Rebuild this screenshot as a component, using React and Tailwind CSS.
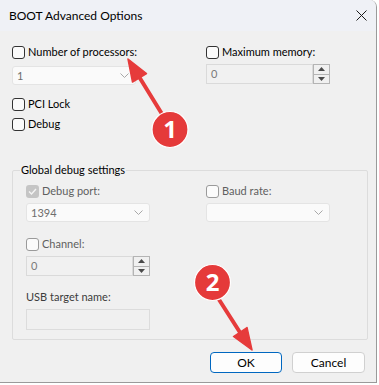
import React from 'react';

const font = { fontFamily: 'Lato, "Noto Sans", sans-serif' };

const Check = ({ checked = false, muted = false }) => {
  if (checked) {
    return (
      <span className="w-[13px] h-[13px] shrink-0 rounded-[3px] bg-[#c5c5c5] flex items-center justify-center">
        <svg width="9" height="7" viewBox="0 0 9 7">
          <polyline points="1,3.5 3.5,6 8,1" fill="none" stroke="#f4f4f4" strokeWidth="1.4" />
        </svg>
      </span>
    );
  }
  return (
    <span
      className={
        muted
          ? 'w-[13px] h-[13px] shrink-0 rounded-[3px] border border-[#9a9a9a] bg-[#fbfbfb]'
          : 'w-[13px] h-[13px] shrink-0 rounded-[3px] border border-[#333333] bg-[#fbfbfb]'
      }
    />
  );
};

const CheckRow = ({ label, checked, muted, className = '' }) => (
  <div className={`h-[14px] flex items-center gap-[3px] ${className}`}>
    <Check checked={checked} muted={muted} />
    <span className={muted ? 'text-[#5f5f5f]' : 'text-black'}>{label}</span>
  </div>
);

const Chevron = () => (
  <svg width="9" height="5" viewBox="0 0 9 5" className="shrink-0">
    <polyline points="0.5,0.5 4.5,4.5 8.5,0.5" fill="none" stroke="#a8a8a8" strokeWidth="1" />
  </svg>
);

const Combo = ({ value, className = '' }) => (
  <div className={`w-[124px] h-[19px] bg-[#fafafa] border border-[#e4e4e4] rounded-[3px] flex items-center justify-between pl-[4px] pr-[6px] text-[#6d6d6d] ${className}`}>
    <span>{value}</span>
    <Chevron />
  </div>
);

const Spin = ({ value, className = '' }) => (
  <div className={`w-[124px] h-[20px] flex ${className}`}>
    <div className="flex-1 border border-[#dadada] bg-[#f1f1f1] flex items-center pl-[4px] text-[#7a7a7a]">{value}</div>
    <div className="w-[17px] flex flex-col border border-[#b4b4b4] bg-[#f0f0f0]">
      <div className="flex-1 flex items-center justify-center border-b border-[#b4b4b4]">
        <svg width="7" height="4" viewBox="0 0 7 4"><polygon points="0,4 3.5,0 7,4" fill="#4a4a4a" /></svg>
      </div>
      <div className="flex-1 flex items-center justify-center">
        <svg width="7" height="4" viewBox="0 0 7 4"><polygon points="0,0 3.5,4 7,0" fill="#4a4a4a" /></svg>
      </div>
    </div>
  </div>
);

const Overlay = () => (
  <svg className="absolute inset-0 pointer-events-none" width="379" height="385" viewBox="0 0 379 385">
    <line x1="162" y1="114" x2="138" y2="75" stroke="#e63b3b" strokeWidth="4" strokeLinecap="round" />
    <polygon points="128,59 146.5,73.5 132.5,82" fill="#e63b3b" stroke="#e63b3b" strokeWidth="1.5" strokeLinejoin="round" />
    <circle cx="170" cy="129.5" r="18" fill="#e53a3a" stroke="#ffffff" strokeWidth="1.2" />
    <text x="170" y="138" textAnchor="middle" fill="#ffffff" fontSize="24" fontWeight="700" fontFamily="Noto Sans, sans-serif">1</text>

    <line x1="218" y1="298" x2="241" y2="334" stroke="#e63b3b" strokeWidth="4" strokeLinecap="round" />
    <polygon points="252,350 247,327.5 233.5,336.5" fill="#e63b3b" stroke="#e63b3b" strokeWidth="1.5" strokeLinejoin="round" />
    <circle cx="212.5" cy="282.5" r="18" fill="#e53a3a" stroke="#ffffff" strokeWidth="1.2" />
    <text x="212.5" y="291" textAnchor="middle" fill="#ffffff" fontSize="24" fontWeight="700" fontFamily="Noto Sans, sans-serif">2</text>
  </svg>
);

export default function App() {
  return (
    <div className="relative w-[379px] h-[385px] bg-[#ffffff] overflow-hidden text-[11px] leading-[14px]" style={font}>
      <div className="w-[377px] h-[383px] bg-[#f0f0f0] border-r border-b border-[#9a9a9a] rounded-tr-[7px] overflow-hidden flex flex-col">
        <div className="h-[31px] shrink-0 bg-[#eff1f6] flex items-center justify-between pl-[9px] pr-[9px]">
          <span className="text-[12px] text-black">BOOT Advanced Options</span>
          <svg width="11" height="11" viewBox="0 0 11 11">
            <path d="M0.5 0.5 L10.5 10.5 M10.5 0.5 L0.5 10.5" stroke="#1a1a1a" strokeWidth="1" />
          </svg>
        </div>

        <div className="pl-[12px] pr-[9px] flex flex-col">
          <div className="mt-[14px] flex">
            <div className="w-[194px] flex flex-col">
              <CheckRow label="Number of processors:" />
              <Combo value="1" className="mt-[7px]" />
            </div>
            <div className="flex flex-col">
              <CheckRow label="Maximum memory:" />
              <Spin value="0" className="mt-[5px]" />
            </div>
          </div>

          <CheckRow label="PCI Lock" className="mt-[12px]" />
          <CheckRow label="Debug" className="mt-[6px]" />

          <fieldset className="mt-[31px] w-[356px] border border-[#dcdcdc] rounded-[2px] pl-[13px] pb-[9px]">
            <legend className="ml-[-6px] px-[1px] leading-[16px] text-black">Global debug settings</legend>
            <div className="mt-[6px] flex">
              <div className="w-[180px] flex flex-col">
                <CheckRow label="Debug port:" checked muted />
                <Combo value="1394" className="mt-[5px]" />
              </div>
              <div className="flex flex-col">
                <CheckRow label="Baud rate:" muted />
                <Combo value="" className="mt-[5px]" />
              </div>
            </div>
            <CheckRow label="Channel:" muted className="mt-[15px]" />
            <Spin value="0" className="mt-[5px] h-[19px]" />
            <div className="mt-[14px] h-[14px] flex items-center text-[#3c3c3c]">USB target name:</div>
            <div className="mt-[5px] w-[124px] h-[21px] border border-[#dcdcdc] bg-[#f0f0f0]" />
          </fieldset>

          <div className="mt-[12px] flex justify-end gap-[10px] pr-[2px]">
            <button className="w-[72px] h-[21px] bg-[#fdfdfd] border border-[#0067c0] rounded-[4px] text-black text-[12px]">OK</button>
            <button className="w-[73px] h-[21px] bg-[#fdfdfd] border border-[#d0d0d0] rounded-[4px] text-black text-[12px]">Cancel</button>
          </div>
        </div>
      </div>
      <Overlay />
    </div>
  );
}
